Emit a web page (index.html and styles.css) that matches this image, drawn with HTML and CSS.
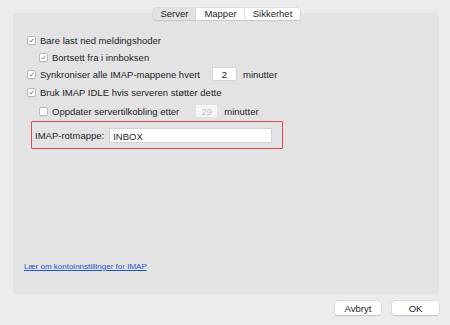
FILE: index.html
```html
<!DOCTYPE html>
<html lang="nb">

<head>
    <meta charset="UTF-8">
    <title>IMAP-innstillinger</title>
    <link rel="stylesheet" href="styles.css">
</head>

<body>
    <div class="dialog">
        <section class="panel">
            <nav class="tabs">
                <button class="tab valgt">Server</button>
                <button class="tab mid">Mapper</button>
                <button class="tab sist">Sikkerhet</button>
            </nav>

            <div class="opts">
                <label class="row">
                    <span class="box checked"><svg viewBox="0 0 10 10"><polyline points="2.2,5.2 4,7.2 7.8,2.4" /></svg></span>
                    Bare last ned meldingshoder
                </label>
                <label class="row sub">
                    <span class="box checked"><svg viewBox="0 0 10 10"><polyline points="2.2,5.2 4,7.2 7.8,2.4" /></svg></span>
                    Bortsett fra i innboksen
                </label>
                <label class="row">
                    <span class="box checked"><svg viewBox="0 0 10 10"><polyline points="2.2,5.2 4,7.2 7.8,2.4" /></svg></span>
                    Synkroniser alle IMAP-mappene hvert
                    <span class="num">2</span>
                    <span class="unit">minutter</span>
                </label>
                <label class="row r4">
                    <span class="box checked"><svg viewBox="0 0 10 10"><polyline points="2.2,5.2 4,7.2 7.8,2.4" /></svg></span>
                    Bruk IMAP IDLE hvis serveren støtter dette
                </label>
                <label class="row sub r5">
                    <span class="box"></span>
                    Oppdater servertilkobling etter
                    <span class="num off">29</span>
                    <span class="unit">minutter</span>
                </label>

                <div class="rot">
                    <span>IMAP-rotmappe:</span>
                    <span class="felt">INBOX</span>
                </div>
            </div>

            <a class="hjelp" href="#">Lær om kontoinnstillinger for IMAP</a>
        </section>

        <footer class="knapper">
            <button class="knap">Avbryt</button>
            <button class="knap ok">OK</button>
        </footer>
    </div>
</body>

</html>
```

FILE: styles.css
```css
* {
    box-sizing: border-box;
    margin: 0;
    padding: 0;
}

body {
    background: #ececec;
    font-family: "Liberation Sans", Arial, sans-serif;
    font-size: 9.5px;
    color: #1e1e1e;
    width: 450px;
    height: 325px;
    overflow: hidden;
}

.dialog {
    padding: 13px 11px 0 13px;
}

.panel {
    height: 281px;
    background: #e3e3e3;
    border-radius: 4px;
    display: flex;
    flex-direction: column;
}

.tabs {
    display: flex;
    justify-content: center;
    margin: -5px 0 0 1px;
}

.tab {
    font: inherit;
    width: 43px;
    height: 12px;
    background: #fff;
    border: none;
    box-shadow: 0 0 0 0.5px #cfcfcf, 0 0.5px 1px rgba(0, 0, 0, 0.15);
    color: #1e1e1e;
    line-height: 12px;
    text-align: center;
    border-radius: 3px 0 0 3px;
}

.tab.mid {
    width: 49px;
    border-radius: 0;
}

.tab.sist {
    width: 55px;
    border-radius: 0 3px 3px 0;
}

.tab.valgt {
    background: #e2e2e2;
}

.opts {
    display: flex;
    flex-direction: column;
    gap: 1px;
    padding: 12px 0 0 14px;
}

.row {
    display: flex;
    align-items: center;
    height: 16px;
    white-space: nowrap;
}

.row.sub {
    padding-left: 12px;
}

.row.r4 {
    margin-top: 1px;
}

.row.r5 {
    margin-top: 2px;
}

.box {
    width: 9px;
    height: 9px;
    margin-right: 4px;
    background: #fff;
    border: 0.5px solid #b9b9b9;
    border-radius: 2px;
    box-shadow: 0 0.5px 0.5px rgba(0, 0, 0, 0.1);
    display: flex;
}

.box svg {
    width: 100%;
    height: 100%;
}

.box polyline {
    fill: none;
    stroke: #444;
    stroke-width: 1;
}

.num {
    width: 25px;
    height: 14px;
    margin-left: 12px;
    background: #fff;
    border: 0.5px solid #d6d6d6;
    text-align: center;
    line-height: 14px;
}

.num.off {
    width: 23px;
    margin-left: 16px;
    color: #c4c4c4;
    background: #f6f6f6;
    border-color: #e2e2e2;
}

.unit {
    margin-left: 6px;
}

.rot {
    display: flex;
    align-items: center;
    width: 252px;
    height: 28px;
    margin: 1px 0 0 4px;
    padding-left: 3px;
    border: 1.5px solid #dc4b4b;
    border-radius: 1px;
}

.felt {
    width: 163px;
    height: 15px;
    margin-left: 5px;
    padding-left: 3px;
    background: #fff;
    border: 0.5px solid #d3d3d3;
    line-height: 15px;
}

.hjelp {
    margin: auto 0 23px 11px;
    font-size: 8px;
    color: #2556c9;
    text-decoration: underline;
}

.knapper {
    display: flex;
    justify-content: flex-end;
    gap: 11px;
    padding-top: 7px;
}

.knap {
    font: inherit;
    width: 46px;
    height: 14px;
    background: #fff;
    border: none;
    border-radius: 3px;
    box-shadow: 0 0 0 0.5px #d2d2d2, 0 0.5px 1px rgba(0, 0, 0, 0.2);
    color: #1e1e1e;
}

.knap.ok {
    width: 47px;
}
```
